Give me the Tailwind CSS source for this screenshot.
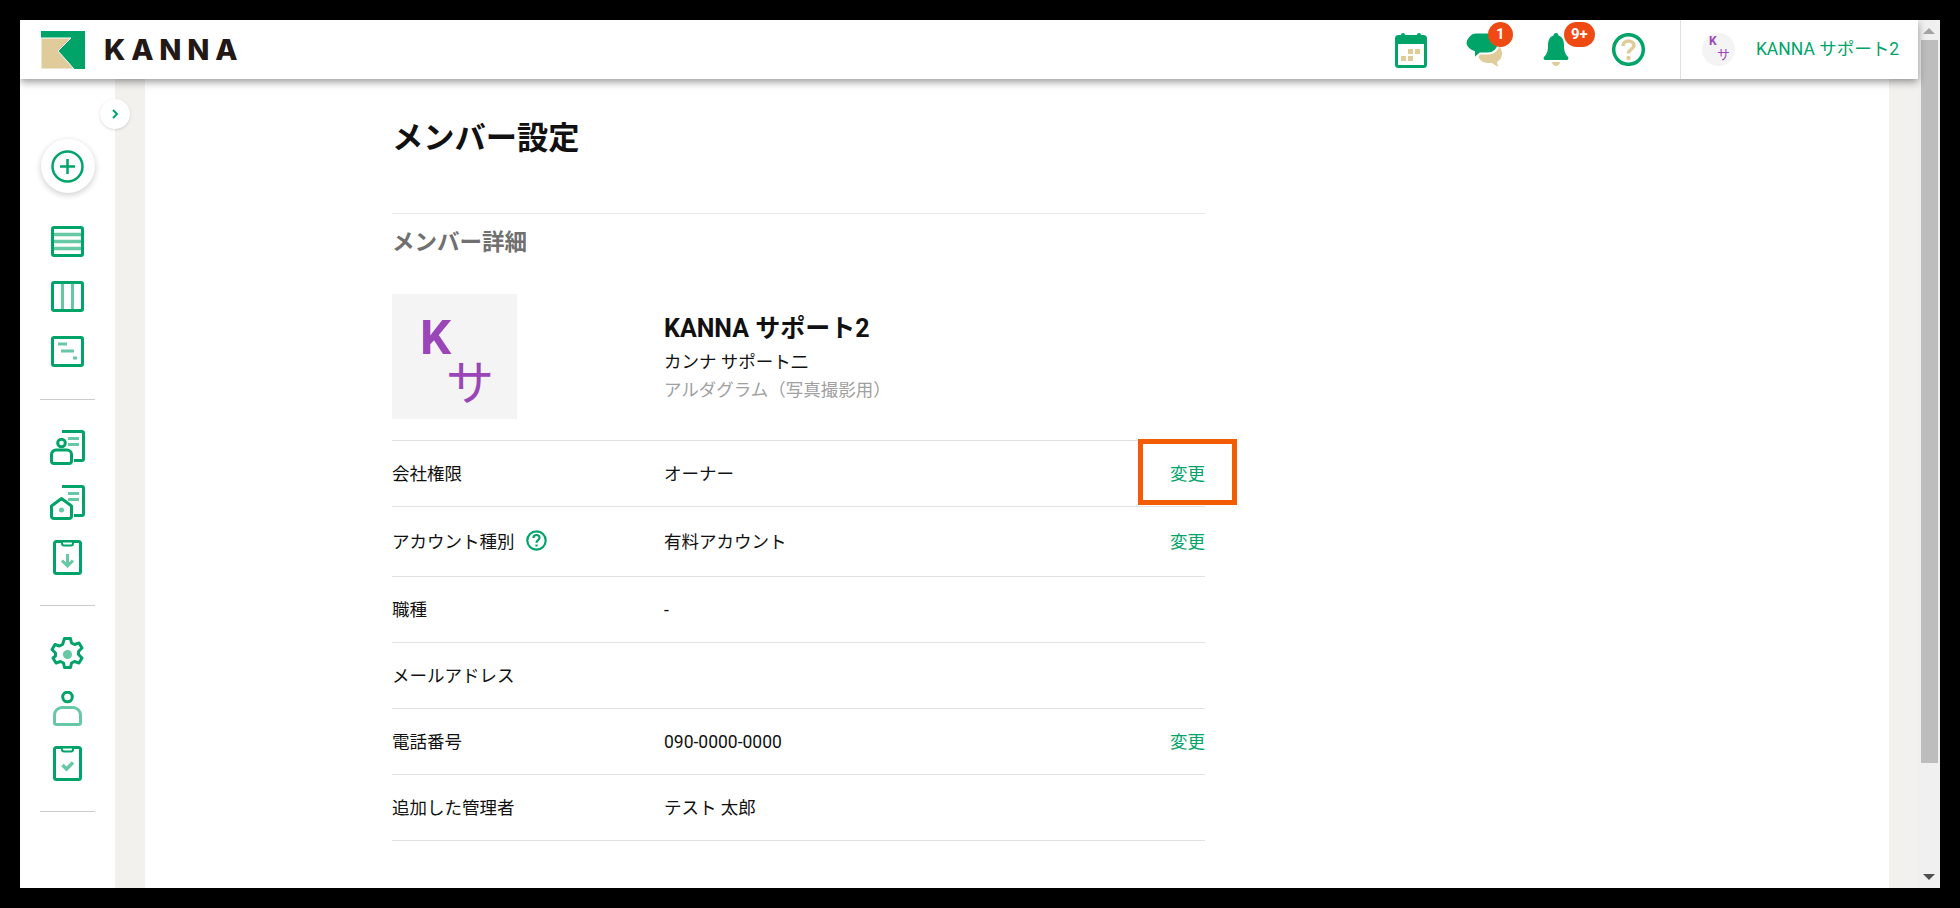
<!DOCTYPE html>
<html lang="ja">
<head>
  <meta charset="UTF-8" />
  <title>メンバー設定 - KANNA</title>
  <script src="https://cdn.jsdelivr.net/npm/@tailwindcss/browser@4"></script>
</head>
<body class="bg-black h-[908px] overflow-hidden p-[20px] font-['Roboto','Noto_Sans_CJK_JP',sans-serif] text-[17.5px] text-[#111111]">
  <div class="flex h-[868px] bg-white">
    <div class="flex-1 flex flex-col min-w-0">

      <!-- Header -->
      <header class="relative z-10 h-[59px] flex items-center bg-white shadow-[0_3px_8px_rgba(0,0,0,0.4)]">
        <svg class="ml-[21px] w-[44px] h-[38px]" viewBox="0 0 44 38">
          <rect width="44" height="38" fill="#00a469" />
          <path d="M0 7H30L17 20L33 38H0Z" fill="#dfcc9a" stroke="#fff" stroke-width="1" />
        </svg>
        <span class="ml-[19px] font-['Inter'] font-extrabold text-[29px] leading-none tracking-[0.2em] text-[#231815]">KANNA</span>

        <div class="ml-auto flex items-center h-full">
          <!-- calendar -->
          <svg class="w-[32px] h-[36px]" viewBox="0 0 32 36">
            <rect x="1.500" y="4.500" width="29" height="30" rx="2" fill="#fff" stroke="#00a469" stroke-width="3" />
            <rect x="1" y="4" width="30" height="8" fill="#00a469" />
            <rect x="6" y="1" width="4" height="5" rx="2" fill="#00a469" />
            <rect x="22" y="1" width="4" height="5" rx="2" fill="#00a469" />
            <path d="M13 17h5v5h-5zM20 17h5v5h-5zM6 24h5v5H6zM13 24h5v5h-5z" fill="#dfcc9a" />
          </svg>
          <!-- chat -->
          <div class="relative ml-[39px] w-[36px] h-[34px]">
            <svg class="w-[36px] h-[34px]" viewBox="0 0 36 34">
              <path d="M22 11h4c6 0 10 4 10 9.500 0 4-2 7-5 8.500l1 5-6-4h-4c-6 0-10-4-10-9.500S16 11 22 11z" fill="#dfcc9a" />
              <path d="M10 -0.500h12c6 0 10.500 4.500 10.500 10.500S28 20.500 22 20.500H14l-6 5.500 0-7C3 17 -0.500 14 -0.500 10S4 -0.500 10 -0.500z" fill="#00a469" stroke="#fff" stroke-width="2" />
            </svg>
            <span class="absolute right-[-11px] top-[-11px] w-[25px] h-[25px] rounded-full bg-[#f04a14] text-white text-[15px] font-bold flex items-center justify-center">1</span>
          </div>
          <!-- bell -->
          <div class="relative ml-[41px] w-[26px] h-[33px]">
            <svg class="w-[26px] h-[33px]" viewBox="0 0 26 33">
              <path d="M13 0c1.500 0 2.500 1 2.500 2.500C20 4 21 8 21 13c0 5 1 8 4 11 1 1 0 3-1 3H2c-1 0-2-2-1-3 3-3 4-6 4-11 0-5 1-9 5.500-10.500C10.500 1 11.500 0 13 0z" fill="#00a469" />
              <path d="M9 29h8c0 2-2 4-4 4s-4-2-4-4z" fill="#dfcc9a" />
            </svg>
            <span class="absolute left-[21px] top-[-11px] w-[31px] h-[25px] rounded-full bg-[#f04a14] text-white text-[15px] font-bold flex items-center justify-center">9+</span>
          </div>
          <!-- help -->
          <svg class="ml-[43px] w-[33px] h-[33px]" viewBox="0 0 33 33">
            <circle cx="16.500" cy="16.500" r="14.800" fill="none" stroke="#00a469" stroke-width="3.500" />
            <path d="M11 13c0-3 2.500-5 5.500-5s5.500 2 5.500 4.500c0 3.500-5.500 4-5.500 8" fill="none" stroke="#dfcc9a" stroke-width="3.500" />
            <circle cx="16.500" cy="25" r="2.200" fill="#dfcc9a" />
          </svg>

          <div class="ml-[35px] h-full border-l border-[#e0e0e0] flex items-center pl-[21px] pr-[19px]">
            <div class="w-[33px] h-[33px] rounded-full bg-[#f4f4f4] text-[#9a46b8] flex flex-col text-[12px] leading-[13px]">
              <span class="pl-[7px] pt-[2px] font-bold">K</span>
              <span class="pl-[15px] text-[13px]">サ</span>
            </div>
            <span class="ml-[21px] text-[#00a469]">KANNA サポート2</span>
          </div>
        </div>
      </header>

      <div class="relative flex-1 flex min-h-0">
        <!-- Sidebar -->
        <aside class="w-[95px] bg-white flex flex-col items-center pt-[60px]">
          <div class="w-[54px] h-[54px] rounded-full bg-white shadow-[0_2px_6px_rgba(0,0,0,0.2)] flex items-center justify-center">
            <svg class="w-[33px] h-[33px]" viewBox="0 0 33 33" fill="none" stroke="#00a469" stroke-width="2.500">
              <circle cx="16.500" cy="16.500" r="15" />
              <path d="M16.500 9v15M9 16.500h15" />
            </svg>
          </div>

          <svg class="mt-[33px] w-[33px] h-[31px]" viewBox="0 0 33 31">
            <path d="M3 8.500h27M3 15.500h27M3 22.500h27" stroke="#66c8a5" stroke-width="3.500" />
            <rect x="1.500" y="1.500" width="30" height="28" rx="1.500" fill="none" stroke="#00a469" stroke-width="3" />
          </svg>
          <svg class="mt-[24px] w-[33px] h-[31px]" viewBox="0 0 33 31">
            <path d="M11.500 3v25M21.500 3v25" stroke="#66c8a5" stroke-width="3" />
            <rect x="1.500" y="1.500" width="30" height="28" rx="1.500" fill="none" stroke="#00a469" stroke-width="3" />
          </svg>
          <svg class="mt-[24px] w-[33px] h-[31px]" viewBox="0 0 33 31">
            <path d="M7 8h9M10 15h13M22 22h4" stroke="#66c8a5" stroke-width="3" />
            <rect x="1.500" y="1.500" width="30" height="28" rx="1.500" fill="none" stroke="#00a469" stroke-width="3" />
          </svg>
          <div class="mt-[32px] w-[55px] border-t border-[#cccccc]"></div>

          <svg class="mt-[30px] w-[35px] h-[35px]" viewBox="0 0 35 35" fill="none" stroke="#00a469" stroke-width="3">
            <path d="M12 1.500h20a1.500 1.500 0 0 1 1.500 1.500v26a1.500 1.500 0 0 1-1.500 1.500h-8" />
            <path d="M18 8.500h11M18 14.500h11" stroke="#66c8a5" />
            <circle cx="11.500" cy="13" r="3.800" fill="#fff" />
            <path d="M6 20h11a4.500 4.500 0 0 1 4.500 4.500v6.500a2.500 2.500 0 0 1-2.500 2.500H4a2.500 2.500 0 0 1-2.500-2.500v-6.500A4.500 4.500 0 0 1 6 20z" fill="#fff" />
          </svg>
          <svg class="mt-[20px] w-[35px] h-[35px]" viewBox="0 0 35 35" fill="none" stroke="#00a469" stroke-width="3">
            <path d="M12 1.500h20a1.500 1.500 0 0 1 1.500 1.500v26a1.500 1.500 0 0 1-1.500 1.500h-8" />
            <path d="M18 8.500h11M18 14.500h11" stroke="#66c8a5" />
            <path d="M11.500 13.500L21.500 21v10a2.500 2.500 0 0 1-2.500 2.500H4a2.500 2.500 0 0 1-2.500-2.500V21z" fill="#fff" stroke-linejoin="round" />
            <circle cx="11.500" cy="25" r="2.500" fill="#66c8a5" stroke="none" />
          </svg>
          <svg class="mt-[20px] w-[29px] h-[35px]" viewBox="0 0 29 35" fill="none" stroke="#00a469" stroke-width="3">
            <rect x="1.500" y="1.500" width="26" height="32" rx="2" />
            <path d="M9 1.500h11v2a2 2 0 0 1-2 2h-7a2 2 0 0 1-2-2z" fill="#fff" stroke-width="2" />
            <path d="M14.500 14v12M9 20.500l5.500 5.500 5.500-5.500" stroke="#66c8a5" />
          </svg>
          <div class="mt-[30px] w-[55px] border-t border-[#cccccc]"></div>

          <svg class="mt-[31px] w-[35px] h-[35px]" viewBox="0 0 35 35" fill="none" stroke="#00a469" stroke-width="3">
            <path d="M14.500 1.500h6l1 4.500 3 1.500 4.500-1.500 3 5-3.500 3.500v3l3.500 3.500-3 5-4.500-1.500-3 1.500-1 4.500h-6l-1-4.500-3-1.500-4.500 1.500-3-5L5.500 19v-3L2 12.500l3-5 4.500 1.500 3-1.500z" stroke-linejoin="round" />
            <circle cx="17.500" cy="17.500" r="4.500" fill="#66c8a5" stroke="none" />
          </svg>
          <svg class="mt-[19px] w-[29px] h-[35px]" viewBox="0 0 29 35" fill="none" stroke-width="3">
            <circle cx="14.500" cy="6" r="4.800" stroke="#00a469" />
            <path d="M9 16.500h11a7.500 7.500 0 0 1 7.500 7.500v7.500a2 2 0 0 1-2 2h-22a2 2 0 0 1-2-2V24A7.500 7.500 0 0 1 9 16.500z" stroke="#66c8a5" />
          </svg>
          <svg class="mt-[20px] w-[29px] h-[35px]" viewBox="0 0 29 35" fill="none" stroke="#00a469" stroke-width="3">
            <rect x="1.500" y="1.500" width="26" height="32" rx="2" />
            <path d="M9 1.500h11v2a2 2 0 0 1-2 2h-7a2 2 0 0 1-2-2z" fill="#fff" stroke-width="2" />
            <path d="M9.500 19l4 4 6.500-6.500" stroke="#66c8a5" stroke-width="3.500" />
          </svg>
          <div class="mt-[30px] w-[55px] border-t border-[#cccccc]"></div>
        </aside>

        <div class="w-[30px] bg-[#f2f1ee]"></div>

        <!-- Sidebar toggle -->
        <button class="absolute left-[80px] top-[20px] w-[30px] h-[30px] rounded-full bg-white shadow-[0_1px_3px_rgba(0,0,0,0.15)] flex items-center justify-center">
          <svg class="w-[8px] h-[10px]" viewBox="0 0 8 10" fill="none" stroke="#00a469" stroke-width="2"><path d="M2 1l4 4-4 4" /></svg>
        </button>

        <!-- Main -->
        <main class="relative flex-1 bg-white pl-[247px] pt-[30px]">
          <div class="w-[813px]">
            <h1 class="text-[31.25px] font-bold leading-[60px]">メンバー設定</h1>
            <div class="mt-[44px] border-t border-[#e8e8e8] pt-[8px]">
              <h2 class="text-[22.500px] font-bold leading-[40px] text-[#707070]">メンバー詳細</h2>
            </div>

            <div class="mt-[32px] flex items-center h-[125px]">
              <div class="w-[125px] h-[125px] bg-[#f4f4f4] text-[#9a46b8] flex flex-col leading-none">
                <span class="pl-[28px] pt-[19px] text-[49px] font-bold">K</span>
                <span class="pl-[54px] text-[48px] leading-[44px]">サ</span>
              </div>
              <div class="ml-[147px] pt-[2px]">
                <p class="text-[25px] font-bold leading-[34px]">KANNA サポート2</p>
                <p class="leading-[32px]">カンナ サポート二</p>
                <p class="leading-[25px] text-[#a0a0a0]">アルダグラム（写真撮影用）</p>
              </div>
            </div>

            <dl class="mt-[21px] border-t border-[#e2e2e2]">
              <div class="h-[66px] pt-[1px] flex items-center border-b border-[#e2e2e2]">
                <dt class="w-[272px]">会社権限</dt>
                <dd class="flex-1">オーナー</dd>
                <a class="text-[#00a469]">変更</a>
              </div>
              <div class="h-[70px] pt-[1px] flex items-center border-b border-[#e2e2e2]">
                <dt class="w-[272px] flex items-center">アカウント種別
                  <svg class="ml-[11px] mb-[3px] w-[21px] h-[21px]" viewBox="0 0 21 21" fill="none" stroke="#00a469" stroke-width="2.200">
                    <circle cx="10.500" cy="10.500" r="9.200" />
                    <path d="M7.500 8c0-2 1.300-3 3-3s3 1 3 2.800c0 2.200-3 2.500-3 5" />
                    <path d="M10.500 14.500v2" />
                  </svg>
                </dt>
                <dd class="flex-1">有料アカウント</dd>
                <a class="text-[#00a469]">変更</a>
              </div>
              <div class="h-[66px] pt-[1px] flex items-center border-b border-[#e2e2e2]">
                <dt class="w-[272px]">職種</dt>
                <dd class="flex-1">-</dd>
              </div>
              <div class="h-[66px] pt-[1px] flex items-center border-b border-[#e2e2e2]">
                <dt class="w-[272px]">メールアドレス</dt>
              </div>
              <div class="h-[66px] pt-[1px] flex items-center border-b border-[#e2e2e2]">
                <dt class="w-[272px]">電話番号</dt>
                <dd class="flex-1">090-0000-0000</dd>
                <a class="text-[#00a469]">変更</a>
              </div>
              <div class="h-[66px] pt-[1px] flex items-center border-b border-[#e2e2e2]">
                <dt class="w-[272px]">追加した管理者</dt>
                <dd class="flex-1">テスト 太郎</dd>
              </div>
            </dl>
          </div>

          <!-- Callout around the first change link -->
          <div class="absolute left-[993px] top-[360px] w-[99px] h-[66px] border-[5px] border-[#f25c05]"></div>
        </main>

        <div class="w-[29px] bg-[#f2f1ee]"></div>
      </div>
    </div>

    <!-- Scrollbar -->
    <div class="w-[22px] bg-[#f0f0f0] flex flex-col items-center">
      <div class="mt-[8px] w-0 h-0 border-x-[6px] border-x-transparent border-b-[6px] border-b-[#a3a3a3]"></div>
      <div class="mt-[6px] ml-[1px] w-[17px] h-[723px] bg-[#bdbdbd]"></div>
      <div class="mt-auto mb-[8px] w-0 h-0 border-x-[6px] border-x-transparent border-t-[6px] border-t-[#505050]"></div>
    </div>
  </div>
</body>
</html>
